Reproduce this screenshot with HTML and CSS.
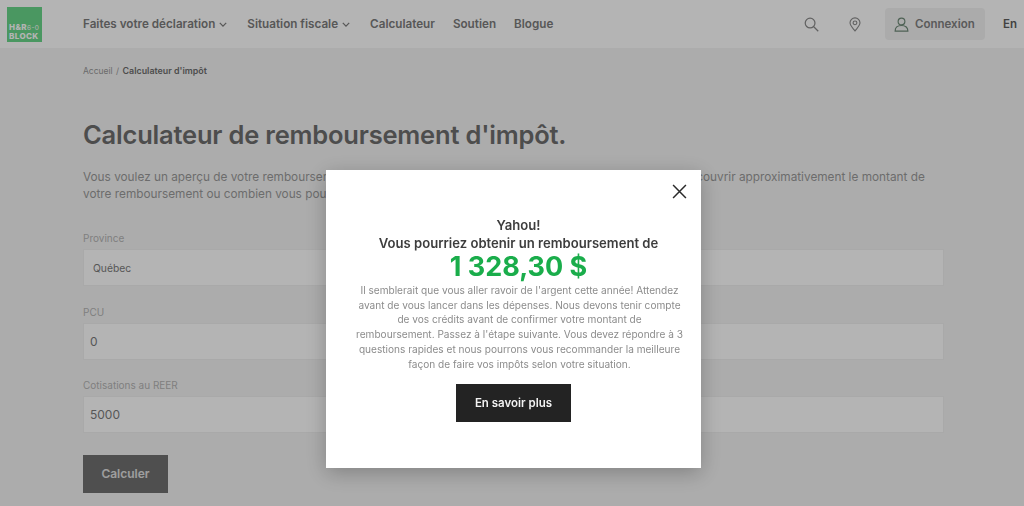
FILE: index.html
```html
<!DOCTYPE html>
<html lang="fr">
<head>
  <meta charset="UTF-8">
  <meta name="viewport" content="width=device-width, initial-scale=1.0">
  <title>Calculateur d'impôt</title>
  <link rel="stylesheet" href="styles.css">
</head>
<body>

  <!-- Header -->
  <header class="site-header">
    <a href="#" class="logo">
      <span class="logo-text">H&amp;R<span class="logo-small">6-0</span><br>BLOCK</span>
    </a>
    <nav class="main-nav">
      <a href="#">Faites votre déclaration
        <svg class="chevron" viewBox="0 0 10 6"><path d="M1 1l4 4 4-4"/></svg>
      </a>
      <a href="#">Situation fiscale
        <svg class="chevron" viewBox="0 0 10 6"><path d="M1 1l4 4 4-4"/></svg>
      </a>
      <a href="#">Calculateur</a>
      <a href="#">Soutien</a>
      <a href="#">Blogue</a>
    </nav>
    <div class="header-tools">
      <svg class="tool-icon search-icon" viewBox="0 0 16 16"><circle cx="6.5" cy="6.5" r="5.2"/><path d="M10.4 10.4l4.8 4.8"/></svg>
      <svg class="tool-icon pin-icon" viewBox="0 0 14 17"><path d="M7 16C4.5 12.8 1.2 10 1.2 6.6a5.8 5.8 0 0 1 11.6 0C12.8 10 9.5 12.8 7 16z"/><circle cx="7" cy="6.6" r="2.2"/></svg>
      <a href="#" class="login-button">
        <svg class="user-icon" viewBox="0 0 16 16"><circle cx="8" cy="4.8" r="3.6"/><path d="M1.2 15c0-3.6 2.6-6 6.8-6s6.8 2.4 6.8 6z"/></svg>
        Connexion
      </a>
      <a href="#" class="lang-link">En</a>
    </div>
  </header>

  <!-- Main content -->
  <main class="main-container">
    <p class="breadcrumb">Accueil <span class="crumb-sep">/</span> <strong>Calculateur d'impôt</strong></p>
    <h1>Calculateur de remboursement d'impôt.</h1>
    <p class="intro">Vous voulez un aperçu de votre remboursement d'impôt ou de votre soldes? Utilisez notre calculateur pour découvrir approximativement le montant de votre remboursement ou combien vous pourriez devoir.</p>

    <form class="calc-form">
      <div class="field"><label>Province</label><input class="select-input" type="text" value="Québec"></div>
      <div class="field"><label>&nbsp;</label><input type="text"></div>
      <div class="field"><label>PCU</label><input type="text" value="0"></div>
      <div class="field"><label>&nbsp;</label><input type="text"></div>
      <div class="field"><label>Cotisations au REER</label><input type="text" value="5000"></div>
      <div class="field"><label>&nbsp;</label><input type="text"></div>
    </form>
    <button class="calc-button">Calculer</button>
  </main>

  <!-- Modal -->
  <div class="overlay">
    <div class="modal">
      <svg class="close-icon" viewBox="0 0 14 14"><path d="M1 1l12 12M13 1L1 13"/></svg>
      <h2 class="modal-title">Yahou!<br>Vous pourriez obtenir un remboursement de</h2>
      <div class="modal-amount">1 328,30 $</div>
      <p class="modal-text">Il semblerait que vous aller ravoir de l'argent cette année! Attendez avant de vous lancer dans les dépenses. Nous devons tenir compte de vos crédits avant de confirmer votre montant de<br>remboursement. Passez à l'étape suivante. Vous devez répondre à 3 questions rapides et nous pourrons vous recommander la meilleure façon de faire vos impôts selon votre situation.</p>
      <a href="#" class="modal-button">En savoir plus</a>
    </div>
  </div>

</body>
</html>
```

FILE: styles.css
```css
/* General body styles */
body {
  font-family: 'Inter', 'Liberation Sans', sans-serif;
  margin: 0;
  padding: 0;
  height: 506px;
  overflow: hidden;
  background: #f4f4f4;
  color: #5a5a5a;
}

/* Header */
.site-header {
  display: flex;
  align-items: center;
  height: 48px;
  padding: 0 7px;
  background: #ffffff;
  box-sizing: border-box;
}

.logo {
  display: flex;
  align-items: flex-end;
  width: 35px;
  height: 35px;
  background: #69d68a;
  color: #fff;
  text-decoration: none;
  box-sizing: border-box;
  padding: 0 0 2px 2px;
}

.logo-text {
  font-size: 8px;
  line-height: 8px;
  font-weight: 800;
  letter-spacing: 0.4px;
}

.logo-small {
  font-weight: 400;
  font-size: 6.5px;
}

.main-nav {
  display: flex;
  align-items: center;
  gap: 18px;
  margin-left: 41px;
}

.main-nav a {
  display: flex;
  align-items: center;
  gap: 4px;
  color: #7c7c7c;
  font-size: 11.7px;
  font-weight: 600;
  text-decoration: none;
}

.chevron {
  width: 8px;
  height: 5px;
  margin-right: 2px;
  fill: none;
  stroke: #7c7c7c;
  stroke-width: 1.6;
}

.header-tools {
  display: flex;
  align-items: center;
  margin-left: auto;
}

.tool-icon {
  fill: none;
  stroke: #8a8a8a;
  stroke-width: 1.3;
}

.search-icon {
  width: 15px;
  height: 15px;
}

.pin-icon {
  width: 12px;
  height: 15px;
  margin-left: 30px;
}

.login-button {
  display: flex;
  align-items: center;
  gap: 6px;
  width: 100px;
  height: 32px;
  margin-left: 24px;
  padding-left: 9px;
  box-sizing: border-box;
  border-radius: 4px;
  background: #f2f2f2;
  color: #808080;
  font-size: 11.5px;
  font-weight: 600;
  text-decoration: none;
}

.user-icon {
  width: 15px;
  height: 15px;
  fill: none;
  stroke: #6f8a78;
  stroke-width: 1.2;
}

.lang-link {
  margin-left: 18px;
  color: #5e5e5e;
  font-size: 11.5px;
  font-weight: 600;
  text-decoration: none;
}

/* Main container */
.main-container {
  padding: 0 80px 0 83px;
}

.breadcrumb {
  margin: 0;
  padding-top: 17px;
  font-size: 8.5px;
  line-height: 11px;
  color: #989898;
}

.crumb-sep {
  margin: 0 1px;
}

.breadcrumb strong {
  color: #6e6e6e;
  font-size: 8.9px;
  font-weight: 600;
}

h1 {
  margin: 43px 0 0;
  font-size: 25.5px;
  line-height: 30px;
  font-weight: 600;
  letter-spacing: -0.2px;
  color: #6e6e6e;
}

.intro {
  margin: 19px 0 0;
  font-size: 11.8px;
  line-height: 17px;
  color: #9a9a9a;
}

/* Form */
.calc-form {
  display: grid;
  grid-template-columns: 1fr 1fr;
  column-gap: 20px;
  row-gap: 19.5px;
  margin-top: 29px;
}

.field label {
  display: block;
  margin-bottom: 4px;
  font-size: 10px;
  line-height: 13px;
  color: #b4b4b4;
}

.field input {
  display: block;
  width: 100%;
  height: 37px;
  padding: 0 6px;
  box-sizing: border-box;
  border: 1px solid #f0f0f0;
  border-radius: 0;
  background: #ffffff;
  font-family: inherit;
  font-size: 12px;
  color: #7c7c7c;
  outline: none;
}

.field .select-input {
  padding: 0 9px;
  font-size: 10.3px;
}

.calc-button {
  display: block;
  width: 85px;
  height: 38px;
  margin-top: 21.5px;
  border: none;
  background: #707070;
  color: #e0e0e0;
  font-family: inherit;
  font-size: 12px;
  font-weight: 600;
}

/* Modal */
.overlay {
  position: fixed;
  top: 0;
  left: 0;
  right: 0;
  bottom: 0;
  background: rgba(0, 0, 0, 0.295);
}

.modal {
  position: absolute;
  top: 170px;
  left: 326px;
  width: 375px;
  height: 298px;
  padding-top: 46px;
  box-sizing: border-box;
  background: #ffffff;
  box-shadow: 0 5px 20px rgba(0, 0, 0, 0.25);
  text-align: center;
}

.close-icon {
  position: absolute;
  top: 14px;
  right: 14px;
  width: 15px;
  height: 15px;
  fill: none;
  stroke: #2a2a2a;
  stroke-width: 1.4;
}

.modal-title {
  margin: 0 0 0 10px;
  font-size: 13.1px;
  line-height: 18px;
  font-weight: 600;
  color: #3d3d3d;
}

.modal-amount {
  margin: 1px 0 0 10px;
  font-size: 27px;
  line-height: 28px;
  font-weight: 700;
  color: #1aad4b;
}

.modal-text {
  margin: 2px 18px 0 30px;
  font-size: 10.1px;
  line-height: 14.7px;
  color: #8c8c8c;
}

.modal-button {
  display: block;
  width: 115px;
  height: 38px;
  margin: 13px auto 0;
  background: #232323;
  color: #f2f2f2;
  font-size: 11.5px;
  font-weight: 600;
  line-height: 38px;
  text-decoration: none;
}
```
